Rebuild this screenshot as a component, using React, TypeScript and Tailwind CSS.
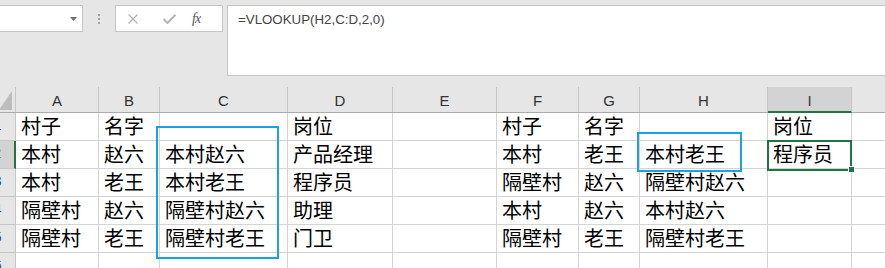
const cols = [
  { key: 'A', w: 'w-[83px]' },
  { key: 'B', w: 'w-[61px]' },
  { key: 'C', w: 'w-[128px]' },
  { key: 'D', w: 'w-[105px]' },
  { key: 'E', w: 'w-[104px]' },
  { key: 'F', w: 'w-[82px]' },
  { key: 'G', w: 'w-[61px]' },
  { key: 'H', w: 'w-[128px]' },
  { key: 'I', w: 'w-[84px]' },
  { key: 'J', w: 'w-[80px]' },
];

const rows: string[][] = [
  ['村子', '名字', '', '岗位', '', '村子', '名字', '', '岗位', ''],
  ['本村', '赵六', '本村赵六', '产品经理', '', '本村', '老王', '本村老王', '程序员', ''],
  ['本村', '老王', '本村老王', '程序员', '', '隔壁村', '赵六', '隔壁村赵六', '', ''],
  ['隔壁村', '赵六', '隔壁村赵六', '助理', '', '本村', '赵六', '本村赵六', '', ''],
  ['隔壁村', '老王', '隔壁村老王', '门卫', '', '隔壁村', '老王', '隔壁村老王', '', ''],
  ['', '', '', '', '', '', '', '', '', ''],
];

export default function App() {
  return (
    <div className="relative w-[885px] h-[268px] overflow-hidden bg-white font-['Liberation_Sans',sans-serif]">
      {/* formula bar */}
      <div className="flex items-start h-[87px] pt-[5px] bg-[#e6e6e6]">
        <div className="flex shrink-0 items-center justify-between -ml-[20px] w-[103px] h-[27px] bg-white border border-[#c6c6c6] pr-[5px]">
          <span className="-ml-[6px] text-[13px] text-[#333]">I2</span>
          <svg width="7" height="4" viewBox="0 0 7 4">
            <path d="M0 0 L7 0 L3.5 4 Z" fill="#707070" />
          </svg>
        </div>
        <div className="flex shrink-0 flex-col items-center justify-center gap-[2px] w-[32px] h-[27px]">
          <span className="w-[2px] h-[2px] bg-[#a0a0a0]" />
          <span className="w-[2px] h-[2px] bg-[#a0a0a0]" />
          <span className="w-[2px] h-[2px] bg-[#a0a0a0]" />
        </div>
        <div className="flex shrink-0 items-center w-[108px] h-[27px] bg-white border border-[#c6c6c6]">
          <svg className="ml-[12px]" width="10" height="10" viewBox="0 0 10 10">
            <path d="M0.5 0.5 L9.5 9.5 M9.5 0.5 L0.5 9.5" stroke="#b4b4b4" strokeWidth="1.3" />
          </svg>
          <svg className="ml-[25px]" width="13" height="10" viewBox="0 0 13 10">
            <path d="M0.5 5 L4.5 9 L12.5 0.8" stroke="#b4b4b4" strokeWidth="2" fill="none" />
          </svg>
          <span className="ml-[16px] font-['Liberation_Serif',serif] italic text-[14px] text-[#555] tracking-[-1px]">fx</span>
        </div>
        <div className="shrink-0 ml-[4px] w-[680px] h-[71px] bg-white border border-[#c6c6c6] pl-[10px] pt-[6px] text-[13.3px] leading-[15px] text-[#444]">
          =VLOOKUP(H2,C:D,2,0)
        </div>
      </div>

      {/* sheet */}
      <div className="-ml-[20px] flex flex-col">
        <div className="flex h-[26px] bg-[#e6e6e6] border-b border-[#ababab]">
          <div className="flex shrink-0 items-end justify-end w-[36px] h-full border-r border-[#c6c6c6] pr-[3px] pb-[2px]">
            <svg width="13" height="19" viewBox="0 0 13 19">
              <path d="M13 0 L13 19 L0 19 Z" fill="#bdbdbd" />
            </svg>
          </div>
          {cols.map((c) => (
            <div
              key={c.key}
              className={`${c.w} shrink-0 flex items-center justify-center pt-[4px] text-[15px] text-[#333] border-r border-[#c6c6c6] ${
                c.key === 'I' ? 'bg-[#d3d3d3] border-b-2 border-b-[#217346] -mb-[1px]' : ''
              }`}
            >
              {c.key === 'J' ? '' : c.key}
            </div>
          ))}
        </div>
        {rows.map((r, i) => (
          <div key={i} className="flex h-[28px]">
            <div
              className={`flex items-end justify-center w-[36px] shrink-0 border-b border-[#c6c6c6] pb-[4px] text-[15px] text-[#1f4e9a] ${
                i === 1 ? 'bg-[#d3d3d3] border-r-2 border-r-[#217346]' : 'bg-[#e6e6e6] border-r border-r-[#c6c6c6]'
              }`}
            >
              {i + 1}
            </div>
            {cols.map((c, j) => (
              <div
                key={c.key}
                className={`${c.w} shrink-0 flex items-end pl-[5px] pb-[1px] border-r border-b border-[#d4d4d4] font-['Noto_Sans_CJK_SC',sans-serif] text-[20px] leading-[26px] text-black whitespace-nowrap overflow-hidden`}
              >
                {r[j]}
              </div>
            ))}
          </div>
        ))}
      </div>

      {/* annotation boxes */}
      <div className="absolute left-[156px] top-[126px] w-[123px] h-[133px] border-2 border-[#1ba1e2]" />
      <div className="absolute left-[637px] top-[132px] w-[105px] h-[40px] border-2 border-[#1ba1e2]" />

      {/* selection */}
      <div className="absolute left-[767px] top-[140px] w-[85px] h-[31px] border-2 border-[#217346]" />
      <div className="absolute left-[848px] top-[166px] w-[7px] h-[7px] bg-[#217346] border border-white" />
    </div>
  );
}
